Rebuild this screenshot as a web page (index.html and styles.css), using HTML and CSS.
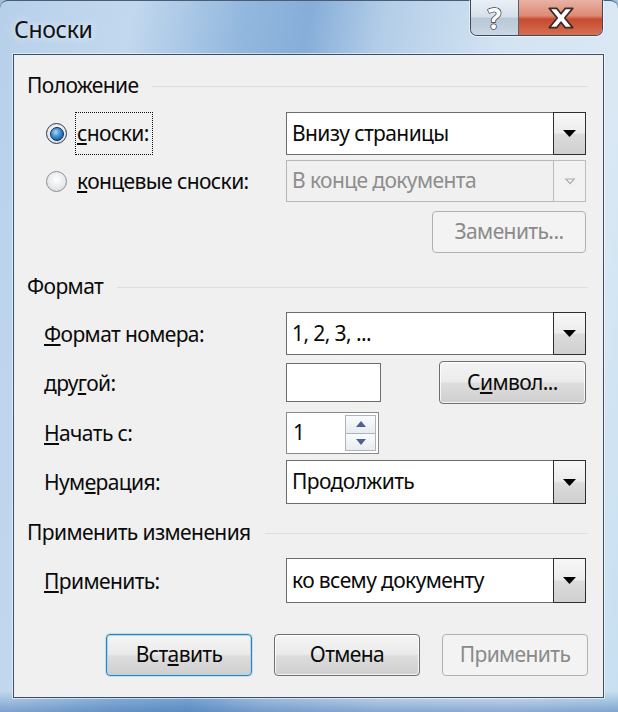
FILE: index.html
```html
<!DOCTYPE html>
<html>
<head>
  <meta charset="utf-8">
  <title>Сноски</title>
  <link rel="stylesheet" href="styles.css">
</head>
<body>
  <div class="window">
    <div class="titlebar">
      <span class="title">Сноски</span>
      <div class="caption-buttons">
        <div class="cap-btn help"><span>?</span></div>
        <div class="cap-btn close">
          <svg viewBox="0 0 30 24" width="32" height="26">
            <path d="M4,3 L11,3 L15,8 L19,3 L26,3 L18.5,12 L26,21 L19,21 L15,16 L11,21 L4,21 L11.5,12 Z" fill="#fff" stroke="#3b2a2a" stroke-width="1.6" stroke-linejoin="round"/>
          </svg>
        </div>
      </div>
    </div>

    <div class="client">
      <div class="group-title g1"><span>Положение</span><i></i></div>

      <div class="row r1">
        <div class="label radio-label">
          <span class="radio checked"></span>
          <span class="focus"><u>с</u>носки:</span>
        </div>
        <div class="combo">
          <span class="combo-text">Внизу страницы</span>
          <span class="combo-btn">
            <svg viewBox="0 0 13 7" width="13" height="7"><path d="M0,0 H13 L6.5,7 Z" fill="#000"/></svg>
          </span>
        </div>
      </div>

      <div class="row r2">
        <div class="label radio-label">
          <span class="radio"></span>
          <span class="plain"><u>к</u>онцевые сноски:</span>
        </div>
        <div class="combo disabled">
          <span class="combo-text">В конце документа</span>
          <span class="combo-btn">
            <svg viewBox="0 0 12 7" width="12" height="7"><path d="M0.5,0.5 H11.5 L6,6.5 Z M3,1.5 H9 L6,4.8 Z" fill="#a9a9a9" fill-rule="evenodd"/></svg>
          </span>
        </div>
      </div>

      <div class="row r3">
        <div></div>
        <div class="right-align">
          <button class="btn disabled replace">Заменить...</button>
        </div>
      </div>

      <div class="group-title g2"><span>Формат</span><i></i></div>

      <div class="row r4">
        <div class="label"><u>Ф</u>ормат номера:</div>
        <div class="combo">
          <span class="combo-text">1, 2, 3, ...</span>
          <span class="combo-btn">
            <svg viewBox="0 0 13 7" width="13" height="7"><path d="M0,0 H13 L6.5,7 Z" fill="#000"/></svg>
          </span>
        </div>
      </div>

      <div class="row r5">
        <div class="label">дру<u>г</u>ой:</div>
        <div class="split">
          <div class="textbox"></div>
          <button class="btn symbol">С<u>и</u>мвол...</button>
        </div>
      </div>

      <div class="row r6">
        <div class="label"><u>Н</u>ачать с:</div>
        <div class="spinner">
          <span class="spin-text">1</span>
          <span class="spin-btns">
            <span class="spin-up"><svg viewBox="0 0 10 6" width="10" height="6"><path d="M0,6 H10 L5,0 Z" fill="#4d6193"/></svg></span>
            <span class="spin-down"><svg viewBox="0 0 10 6" width="10" height="6"><path d="M0,0 H10 L5,6 Z" fill="#4d6193"/></svg></span>
          </span>
        </div>
      </div>

      <div class="row r7">
        <div class="label">Нум<u>е</u>рация:</div>
        <div class="combo">
          <span class="combo-text">Продолжить</span>
          <span class="combo-btn">
            <svg viewBox="0 0 13 7" width="13" height="7"><path d="M0,0 H13 L6.5,7 Z" fill="#000"/></svg>
          </span>
        </div>
      </div>

      <div class="group-title g3"><span>Применить изменения</span><i></i></div>

      <div class="row r8">
        <div class="label"><u>П</u>рименить:</div>
        <div class="combo">
          <span class="combo-text">ко всему документу</span>
          <span class="combo-btn">
            <svg viewBox="0 0 13 7" width="13" height="7"><path d="M0,0 H13 L6.5,7 Z" fill="#000"/></svg>
          </span>
        </div>
      </div>

      <div class="buttons">
        <button class="btn default">Вст<u>а</u>вить</button>
        <button class="btn">Отмена</button>
        <button class="btn disabled">Применить</button>
      </div>
    </div>
  </div>
</body>
</html>
```

FILE: styles.css
```css
* {
  box-sizing: border-box;
}
body {
  margin: 0;
  width: 618px;
  height: 712px;
  overflow: hidden;
  font-family: "Noto Sans", "Open Sans", sans-serif;
  background: #9cbfe2;
}
.window {
  width: 618px;
  height: 712px;
  padding: 0 14px 14px 13px;
  display: flex;
  flex-direction: column;
  border-radius: 8px 8px 0 0;
  border-top: 1px solid #4a5d75;
  background:
    linear-gradient(180deg, rgba(255,255,255,0) 0%, rgba(255,255,255,0) 97%, rgba(40,95,165,0.45) 100%),
    linear-gradient(100deg, #b7d0ea 0%, #c2d8ee 18%, #93b8de 33%, #86aed9 42%, #b3cde8 52%, #d2e3f2 68%, #dae8f4 85%, #c7dff1 100%);
}
.titlebar {
  height: 53px;
  display: flex;
  justify-content: space-between;
  align-items: flex-start;
}
.title {
  margin-top: 12px;
  margin-left: 1px;
  font-size: 23px;
  letter-spacing: -0.3px;
  color: #111;
  text-shadow: 0 0 8px rgba(255,255,255,0.9);
}
.caption-buttons {
  display: flex;
  margin-top: -1px;
  margin-right: 1px;
  border: 1px solid #3c4a5c;
  border-top: none;
  border-radius: 0 0 7px 7px;
  overflow: hidden;
  box-shadow: 0 0 0 1px rgba(255,255,255,0.5);
}
.cap-btn {
  height: 35px;
  display: flex;
  align-items: center;
  justify-content: center;
}
.cap-btn.help {
  width: 48px;
  border-right: 1px solid #56606c;
  background: linear-gradient(180deg, #e9eff6 0%, #d6e0ea 48%, #b9c7d6 52%, #c9d6e3 100%);
}
.cap-btn.help span {
  font-size: 28px;
  font-weight: bold;
  color: #fff;
  line-height: 1;
  -webkit-text-stroke: 1.4px #2e3540;
  paint-order: stroke fill;
}
.cap-btn.close {
  width: 83px;
  background: linear-gradient(180deg, #e9b2a4 0%, #dc8a75 45%, #c84a30 55%, #d5704f 100%);
}
.client {
  flex: 1;
  background: #f0f0f0;
  border: 1px solid #3d4f63;
  box-shadow: 0 0 0 1px rgba(255,255,255,0.55);
  display: flex;
  flex-direction: column;
  color: #0a0a0a;
  font-size: 21px;
  letter-spacing: -0.6px;
}
.group-title {
  height: 30px;
  display: flex;
  align-items: center;
  padding-left: 13px;
  margin-right: 15px;
}
.group-title i {
  flex: 1;
  height: 1px;
  margin-left: 14px;
  margin-top: 3px;
  background: #d9dee3;
}
.g1 { margin-top: 15px; }
.g2 { margin-top: 18px; }
.g3 { margin-top: 13px; }
.row {
  display: grid;
  grid-template-columns: 272px 300px;
  align-items: center;
}
.r1 { margin-top: 12px; height: 40px; }
.r2 { margin-top: 8px; height: 42px; }
.r3 { margin-top: 9px; height: 42px; }
.r4 { margin-top: 11px; height: 43px; }
.r5 { margin-top: 6px; height: 43px; }
.r6 { margin-top: 8px; height: 42px; }
.r7 { margin-top: 6px; height: 44px; }
.r8 { margin-top: 11px; height: 45px; }
.label {
  padding-left: 30px;
  white-space: nowrap;
}
.radio-label {
  padding-left: 32px;
  display: flex;
  align-items: center;
}
.radio {
  width: 21px;
  height: 21px;
  border-radius: 50%;
  border: 1px solid #8a8f95;
  background: radial-gradient(circle at 50% 40%, #ffffff 0%, #e6e8ea 60%, #c9ccd0 100%);
  margin-right: 10px;
  display: flex;
  align-items: center;
  justify-content: center;
  flex-shrink: 0;
}
.radio.checked {
  border-color: #2a3a4d;
}
.radio.checked::after {
  content: "";
  width: 12px;
  height: 12px;
  border-radius: 50%;
  background: radial-gradient(circle at 40% 35%, #a9d6f6 0%, #3a8ad0 45%, #0d3f7d 100%);
  border: 1px solid #0c2c55;
}
.focus {
  border: 1px dotted #111;
  padding: 6px 3px 7px 1px;
  margin-left: -2px;
}
.combo {
  height: 100%;
  display: flex;
  border: 1px solid #6d6d6d;
  background: #fff;
}
.combo-text {
  flex: 1;
  display: flex;
  align-items: center;
  padding-left: 5px;
  padding-bottom: 2px;
}
.combo-btn {
  width: 33px;
  margin: -1px -1px -1px 0;
  border: 1px solid #2f2f2f;
  background: linear-gradient(180deg, #f7f7f7 0%, #ececec 48%, #dcdcdc 52%, #cfcfcf 100%);
  display: flex;
  align-items: center;
  justify-content: center;
}
.combo.disabled {
  background: #f0f0f0;
  border-color: #b6b6b6;
  color: #8d8d8d;
}
.combo.disabled .combo-btn {
  border-color: #bcbcbc;
  background: #f2f2f2;
}
.right-align {
  display: flex;
  justify-content: flex-end;
  height: 100%;
}
.btn {
  font-family: inherit;
  font-size: 21px;
  letter-spacing: -0.6px;
  color: #0a0a0a;
  height: 42px;
  width: 146px;
  border: 1px solid #6f6f6f;
  border-radius: 4px;
  background: linear-gradient(180deg, #f4f4f4 0%, #ebebeb 48%, #dddddd 52%, #cfcfcf 100%);
  box-shadow: inset 0 0 0 1px rgba(255,255,255,0.8);
  padding: 0 0 2px;
}
.btn.disabled {
  color: #8a8a8a;
  border-color: #adb2b5;
  background: #f3f3f3;
  box-shadow: none;
}
.btn.replace {
  width: 154px;
}
.btn.default {
  border-color: #3c7fb1;
  box-shadow: inset 0 0 0 1px #9edcf5, 0 0 0 1px rgba(120,190,230,0.35);
}
.split {
  display: flex;
  justify-content: space-between;
  align-items: center;
  height: 100%;
}
.textbox {
  width: 95px;
  height: 39px;
  border: 1px solid #6d6d6d;
  background: #fff;
}
.btn.symbol {
  width: 147px;
  height: 43px;
}
.spinner {
  width: 93px;
  height: 100%;
  border: 1px solid #8a8a8a;
  background: #fff;
  display: flex;
}
.spin-text {
  flex: 1;
  display: flex;
  align-items: center;
  padding-left: 6px;
  padding-bottom: 2px;
}
.spin-btns {
  width: 31px;
  margin: 2px 2px 2px 0;
  display: flex;
  flex-direction: column;
  border: 1px solid #a9b3c1;
}
.spin-btns span {
  flex: 1;
  display: flex;
  align-items: center;
  justify-content: center;
  background: linear-gradient(180deg, #fafbfc 0%, #e9ecf0 100%);
}
.spin-up {
  border-bottom: 1px solid #a9b3c1;
}
.buttons {
  display: flex;
  justify-content: flex-end;
  gap: 22px;
  margin-top: 31px;
  padding-right: 15px;
}
```
